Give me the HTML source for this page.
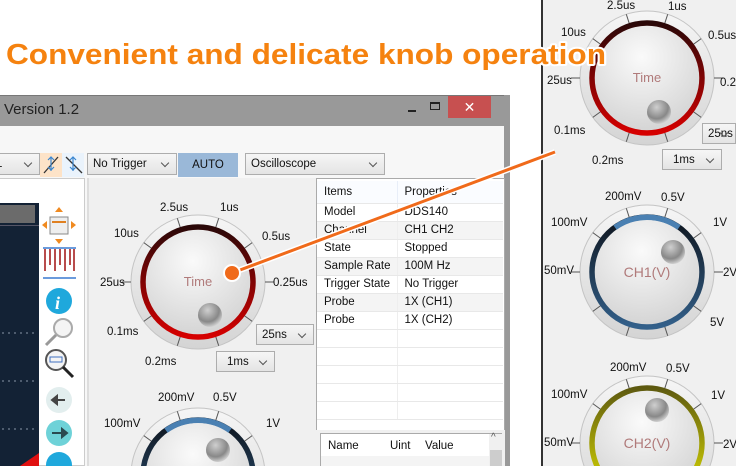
<!DOCTYPE html>
<html style="overflow:hidden"><head><meta charset="utf-8"><style>
*{margin:0;padding:0;box-sizing:border-box}
html,body{overflow:hidden}
body{width:736px;height:466px;overflow:hidden;background:#fff;position:relative;font-family:"Liberation Sans",sans-serif;font-size:11.5px;color:#111}
.a{position:absolute}
.dd{position:absolute;border:1px solid #adadad;background:linear-gradient(#f6f6f6,#e4e4e4);height:22px;line-height:20px;padding-left:5px}
.dd:after{content:"";position:absolute;right:8px;top:6px;width:5px;height:5px;border-right:1.5px solid #555;border-bottom:1.5px solid #555;transform:rotate(45deg)}
table{border-collapse:collapse}
td{height:18px;padding-left:7px;border-bottom:1px solid #e8e8e8;white-space:nowrap}
</style></head><body>
<div class="a" style="left:0;top:95px;width:507px;height:31px;background:#999;border-top:1px solid #777"></div>
<div class="a" style="left:4px;top:101px;font-size:15px;color:#222">Version 1.2</div>
<div class="a" style="left:408px;top:110px;width:8px;height:2px;background:#222"></div>
<div class="a" style="left:430px;top:102px;width:10px;height:8px;border:1.5px solid #222;border-top-width:2.5px"></div>
<div class="a" style="left:448px;top:96px;width:43px;height:22px;background:#c75050;color:#fff;text-align:center;font-size:14px;line-height:22px">✕</div>
<div class="a" style="left:504px;top:95px;width:6px;height:371px;background:#999"></div>
<div class="a" style="left:0;top:126px;width:504px;height:340px;background:#f7f7f7"></div>
<div class="dd" style="left:-10px;top:153px;width:50px">1</div>
<div class="a" style="left:40px;top:153px;width:22px;height:24px;background:#fde3c8"></div>
<div class="a" style="left:62px;top:153px;width:22px;height:24px;background:#eaf3fc"></div>
<svg class="a" style="left:40px;top:153px" width="46" height="24"><path d="M4 20 L18 4" stroke="#333" stroke-width="1.3"/><path d="M11 4v14M8 7l3-3 3 3M8 14l3 3 3-3" stroke="#3a86d0" stroke-width="1.2" fill="none"/><path d="M26 4 L42 20" stroke="#333" stroke-width="1.3"/><path d="M33 4v14M30 7l3-3 3 3M30 14l3 3 3-3" stroke="#3a86d0" stroke-width="1.2" fill="none"/></svg>
<div class="dd" style="left:87px;top:153px;width:90px">No Trigger</div>
<div class="a" style="left:178px;top:153px;width:60px;height:24px;background:#9ab8d8;text-align:center;line-height:24px">AUTO</div>
<div class="dd" style="left:245px;top:153px;width:140px">Oscilloscope</div>
<div class="a" style="left:0;top:178px;width:85px;height:288px;border:1px solid #ccc;border-left:none;background:#fff"></div>
<div class="a" style="left:0;top:203px;width:39px;height:263px;background:#132235"></div>
<div class="a" style="left:0;top:205px;width:35px;height:18px;background:#6b6b6b"></div>
<div class="a" style="left:0;top:225px;width:39px;height:1px;background:#556"></div>
<svg class="a" style="left:0;top:203px" width="85" height="263">
<g stroke="#8a97a8" stroke-dasharray="2 4"><path d="M2 130H36M2 178H36M2 226H36"/></g>
<path d="M20 263 L39 250 V263Z" fill="#e01010"/>
<rect x="50" y="14" width="18" height="17" fill="#eee" stroke="#888"/><path d="M52 19h14" stroke="#e08020" stroke-width="2"/>
<path d="M59 4l-4 5h8zM59 41l-4-5h8zM42 22l5-4v8zM76 22l-5-4v8z" fill="#f08a20"/>
<path d="M43 45h33M43 75h33" stroke="#3a7ad0" stroke-width="1.5"/>
<g stroke="#a01010" stroke-width="1.5"><path d="M45 46v22M50 46v16M55 46v22M60 46v16M65 46v22M70 46v16M74 46v22"/></g>
<circle cx="59" cy="98" r="13" fill="#1fa8dc"/><text x="55" y="106" font-size="18" font-weight="bold" font-style="italic" fill="#fff" font-family="Liberation Serif">i</text>
<circle cx="63" cy="125" r="9" fill="#f4f4f4" stroke="#aaa" stroke-width="2"/><path d="M56 132l-10 10" stroke="#999" stroke-width="3"/>
<circle cx="56" cy="157" r="10" fill="#f4f4f4" stroke="#555" stroke-width="2"/><rect x="50" y="154" width="12" height="5" fill="none" stroke="#4070c0"/><path d="M63 164l10 10" stroke="#222" stroke-width="3"/>
<circle cx="59" cy="197" r="13" fill="#e2eeee"/><path d="M52 197h13M52 197l5-4v8z" stroke="#444" stroke-width="2" fill="#444"/>
<circle cx="59" cy="230" r="13" fill="#6ed2d8"/><path d="M52 230h13M67 230l-5-4v8z" stroke="#2a4a50" stroke-width="2" fill="#2a4a50"/>
<circle cx="59" cy="262" r="13" fill="#1fa8dc"/>
</svg>
<div class="a" style="left:87px;top:178px;width:2px;height:288px;background:#ddd"></div>
<div class="a" style="left:89px;top:178px;width:227px;height:288px;background:#f0f0f0"></div>
<div class="a" style="left:316px;top:178px;width:189px;height:253px;background:#fff;border:1px solid #aaa"></div>
<table class="a" style="left:317px;top:181px;width:186px">
<tr style="background:#fafcff"><td style="width:80px;height:22px;border-right:1px solid #e8eef8">Items</td><td style="height:22px">Properties</td></tr>
<tr><td style="border-right:1px solid #eee">Model</td><td>DDS140</td></tr>
<tr style="background:#f4f4f4"><td style="border-right:1px solid #eee">Channel</td><td>CH1 CH2</td></tr>
<tr><td style="border-right:1px solid #eee">State</td><td>Stopped</td></tr>
<tr style="background:#f4f4f4"><td style="border-right:1px solid #eee">Sample Rate</td><td>100M Hz</td></tr>
<tr><td style="border-right:1px solid #eee">Trigger State</td><td>No Trigger</td></tr>
<tr style="background:#f4f4f4"><td style="border-right:1px solid #eee">Probe</td><td>1X (CH1)</td></tr>
<tr><td style="border-right:1px solid #eee">Probe</td><td>1X (CH2)</td></tr>
<tr><td style="border-right:1px solid #eee"></td><td></td></tr>
<tr><td style="border-right:1px solid #eee"></td><td></td></tr>
<tr><td style="border-right:1px solid #eee"></td><td></td></tr>
<tr><td style="border-right:1px solid #eee"></td><td></td></tr>
<tr><td style="border-right:1px solid #eee"></td><td></td></tr>
</table>
<div class="a" style="left:316px;top:430px;width:189px;height:36px;background:#f0f0f0"></div>
<div class="a" style="left:320px;top:433px;width:182px;height:33px;background:#fff;border:1px solid #aaa"></div>
<div class="a" style="left:489px;top:434px;width:14px;height:32px;background:#f0f0f0"></div>
<div class="a" style="left:490px;top:450px;width:12px;height:16px;background:#cdcdcd"></div>
<div class="a" style="left:491px;top:432px;font-size:10px;color:#555">^</div>
<div class="a" style="left:328px;top:440px">Name</div>
<div class="a" style="left:390px;top:440px">Uint</div>
<div class="a" style="left:425px;top:440px">Value</div>
<div class="a" style="left:321px;top:456px;width:168px;height:10px;background:#f4f4f4"></div>
<div class="a" style="left:541px;top:0;width:195px;height:466px;background:#f0f0f0;border-left:2px solid #333"></div>
<div class="dd" style="left:256px;top:324px;width:58px;height:21px">25ns</div>
<div class="dd" style="left:216px;top:351px;width:59px;height:21px;padding-left:10px">1ms</div>
<div class="dd" style="left:702px;top:123px;width:34px;height:21px;overflow:hidden">25ns</div>
<div class="dd" style="left:662px;top:149px;width:60px;height:21px;padding-left:10px">1ms</div>

<svg class="a" style="left:0;top:0;overflow:hidden" width="736" height="466" font-family="Liberation Sans,sans-serif" font-size="11.5" fill="#111">
<defs>
<linearGradient id="og" x1="0" y1="0" x2="0" y2="1"><stop offset="0" stop-color="#f6f6f6"/><stop offset="1" stop-color="#d4d4d4"/></linearGradient>
<radialGradient id="fg" cx="0.45" cy="0.3" r="0.8"><stop offset="0" stop-color="#fafafa"/><stop offset="1" stop-color="#d0d0d0"/></radialGradient>
<radialGradient id="bg" cx="0.4" cy="0.3" r="0.8"><stop offset="0" stop-color="#cfcfcf"/><stop offset="0.6" stop-color="#888"/><stop offset="1" stop-color="#eee"/></radialGradient>
<linearGradient id="rt" x1="0" y1="0" x2="0" y2="1"><stop offset="0" stop-color="#2a0808"/><stop offset="1" stop-color="#d60000"/></linearGradient>
<linearGradient id="rb" x1="0" y1="0" x2="0" y2="1"><stop offset="0" stop-color="#0e141c"/><stop offset="1" stop-color="#33608a"/></linearGradient>
<linearGradient id="ry" x1="0" y1="0" x2="0" y2="1"><stop offset="0" stop-color="#5e5a10"/><stop offset="1" stop-color="#e0e000"/></linearGradient>
<g id="kb">
<circle r="67" fill="url(#og)" stroke="#c4c4c4"/>
<g stroke="#555" stroke-width="1">
<path d="M0-57V-67" transform="rotate(-18)"/><path d="M0-57V-67" transform="rotate(18)"/>
<path d="M0-57V-67" transform="rotate(-54)"/><path d="M0-57V-67" transform="rotate(54)"/>
<path d="M0-57V-67" transform="rotate(-126)"/><path d="M0-57V-67" transform="rotate(126)"/>
<path d="M0-57V-67" transform="rotate(-162)"/><path d="M0-57V-67" transform="rotate(162)"/>
<path d="M-67 0H-76M67 0H76"/>
</g>
<circle r="52" fill="url(#fg)"/>
</g>
</defs>
<g transform="translate(198,282)"><use href="#kb"/><circle r="55" fill="none" stroke="url(#rt)" stroke-width="5.5"/>
<text y="4" text-anchor="middle" font-size="13" fill="#b07a7a">Time</text><circle cx="12" cy="33" r="12" fill="url(#bg)"/></g>
<text x="160" y="211">2.5us</text><text x="220" y="211">1us</text><text x="114" y="237">10us</text><text x="262" y="240">0.5us</text>
<text x="100" y="286">25us</text><text x="273" y="286">0.25us</text><text x="107" y="335">0.1ms</text><text x="145" y="365">0.2ms</text>
<g transform="translate(198,475)"><use href="#kb"/><circle r="55" fill="none" stroke="url(#rb)" stroke-width="5.5"/>
<path d="M-32-44.5A55 55 0 0 1 32-44.5" fill="none" stroke="#4a80b2" stroke-width="5.5"/><circle cx="20" cy="-25" r="12" fill="url(#bg)"/></g>
<text x="158" y="401">200mV</text><text x="213" y="401">0.5V</text><text x="104" y="427">100mV</text><text x="266" y="427">1V</text>
<g transform="translate(647,78)"><use href="#kb"/><circle r="55" fill="none" stroke="url(#rt)" stroke-width="5.5"/>
<text y="4" text-anchor="middle" font-size="13" fill="#b07a7a">Time</text><circle cx="12" cy="34" r="12" fill="url(#bg)"/></g>
<text x="607" y="9">2.5us</text><text x="668" y="10">1us</text><text x="561" y="36">10us</text><text x="708" y="39">0.5us</text>
<text x="547" y="84">25us</text><text x="720" y="86">0.2</text><text x="554" y="134">0.1ms</text><text x="592" y="164">0.2ms</text>
<g transform="translate(647,272)"><use href="#kb"/><circle r="55" fill="none" stroke="url(#rb)" stroke-width="5.5"/>
<path d="M-32-44.5A55 55 0 0 1 32-44.5" fill="none" stroke="#4a80b2" stroke-width="5.5"/>
<text y="5" text-anchor="middle" font-size="14" fill="#b07a7a">CH1(V)</text><circle cx="26" cy="-20" r="12" fill="url(#bg)"/></g>
<text x="605" y="200">200mV</text><text x="661" y="201">0.5V</text><text x="551" y="226">100mV</text><text x="713" y="226">1V</text>
<text x="544" y="274">50mV</text><text x="723" y="276">2V</text><text x="710" y="326">5V</text>
<g transform="translate(647,443)"><use href="#kb"/><circle r="55" fill="none" stroke="url(#ry)" stroke-width="5.5"/>
<text y="5" text-anchor="middle" font-size="14" fill="#b07a7a">CH2(V)</text><circle cx="10" cy="-33" r="12" fill="url(#bg)"/></g>
<text x="610" y="371">200mV</text><text x="666" y="372">0.5V</text><text x="551" y="398">100mV</text><text x="711" y="399">1V</text>
<text x="544" y="446">50mV</text><text x="723" y="448">2V</text>
<path d="M232 273 L555 152" stroke="#fff" stroke-width="6"/>
<path d="M232 273 L555 152" stroke="#f06a1a" stroke-width="3"/>
<circle cx="232" cy="273" r="8" fill="#f06a1a" stroke="#fff" stroke-width="2"/>
<text x="6" y="64" textLength="600" lengthAdjust="spacingAndGlyphs" font-size="29" font-weight="bold" fill="#f5820f" stroke="#fff" stroke-width="4" paint-order="stroke" stroke-linejoin="round">Convenient and delicate knob operation</text>
</svg>
</body></html>
